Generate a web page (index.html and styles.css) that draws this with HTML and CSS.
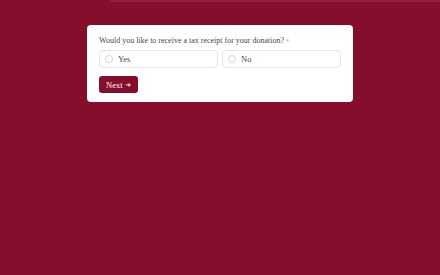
FILE: index.html
```html
<!DOCTYPE html>
<html>
<head>
<meta charset="utf-8">
<link rel="stylesheet" href="styles.css">
</head>
<body>
<div class="progress"><div class="progress-fill"></div></div>
<main class="page">
  <form class="card">
    <p class="question">Would you like to receive a tax receipt for your donation? <span class="req">*</span></p>
    <div class="options">
      <label class="option"><span class="radio"></span><span class="opt-label">Yes</span></label>
      <label class="option"><span class="radio"></span><span class="opt-label">No</span></label>
    </div>
    <button type="button" class="next">Next <span class="arrow">&#10140;</span></button>
  </form>
</main>
</body>
</html>
```
FILE: styles.css
```css
* { box-sizing: border-box; }
html, body { margin: 0; padding: 0; }
body {
  background: #860e2d;
  width: 440px;
  height: 275px;
  font-family: "Liberation Serif", "DejaVu Serif", serif;
  overflow: hidden;
}
.progress {
  height: 2px;
  display: flex;
  justify-content: flex-end;
}
.progress-fill {
  width: 330px;
  background: #8d2240;
}
.page {
  display: flex;
  justify-content: center;
  padding-top: 23px;
}
.card {
  width: 266px;
  height: 77px;
  background: #fff;
  border-radius: 4px;
  padding: 11px 12px 0;
  margin: 0;
}
.question {
  margin: 0;
  font-size: 8px;
  line-height: 10px;
  color: #45455a;
}
.req { color: #d07088; font-size: 6px; vertical-align: top; }
.options {
  display: flex;
  gap: 4px;
  margin-top: 4px;
}
.option {
  flex: 1;
  height: 18px;
  border: 1px solid #e6e6ea;
  border-radius: 4px;
  display: flex;
  align-items: center;
  padding-left: 5px;
  gap: 5px;
}
.radio {
  width: 8px;
  height: 8px;
  border: 1px solid #d4d4da;
  border-radius: 50%;
}
.opt-label {
  font-size: 8.5px;
  color: #45455a;
}
.next {
  display: flex;
  align-items: center;
  gap: 3px;
  margin-top: 8px;
  height: 17px;
  padding: 0 7px;
  background: #860e2d;
  color: #fff;
  border: none;
  border-radius: 3px;
  font-family: "Liberation Serif", "DejaVu Serif", serif;
  font-size: 8.5px;
}
.arrow { font-family: "DejaVu Sans", sans-serif; font-size: 6.5px; }
```
